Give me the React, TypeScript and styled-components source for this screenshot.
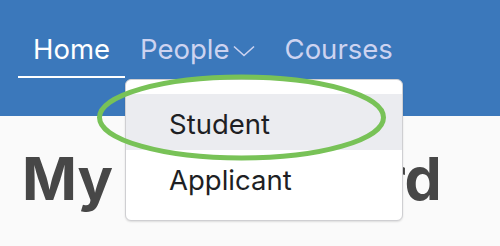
import React from 'react';
import styled, { createGlobalStyle } from 'styled-components';

const GlobalStyle = createGlobalStyle`
  html, body {
    margin: 0;
    padding: 0;
    background: #fafafa;
    font-family: Inter, "Noto Sans", sans-serif;
  }
  * { box-sizing: border-box; }
`;

const Page = styled.div`
  position: relative;
  width: 500px;
  height: 246px;
  overflow: hidden;
`;

const Header = styled.header`
  height: 116px;
  background: #3b78bb;
  padding: 33px 0 0 18px;
`;

const Nav = styled.nav`
  display: flex;
  align-items: flex-start;
`;

const NavItem = styled.div<{ $active?: boolean }>`
  position: relative;
  display: flex;
  align-items: center;
  gap: 3px;
  padding: 0 15px 11px;
  font-size: 27.5px;
  line-height: 32px;
  color: ${(p) => (p.$active ? '#ffffff' : '#cdd3f0')};
  border-bottom: 2px solid ${(p) => (p.$active ? '#ffffff' : 'transparent')};
`;

const Chevron = styled.svg`
  width: 22px;
  height: 12px;
  margin-top: 3px;
`;

const Menu = styled.div`
  position: absolute;
  top: calc(100% + 3px);
  left: 0;
  width: 278px;
  padding: 14px 0;
  background: #ffffff;
  border: 1px solid #cfcfd2;
  border-radius: 6px;
  box-shadow: 0 1px 2px rgba(0, 0, 0, 0.12);
  z-index: 2;
`;

const MenuItem = styled.div<{ $hover?: boolean }>`
  height: 56px;
  display: flex;
  align-items: center;
  padding: 3px 0 0 43px;
  font-size: 27.5px;
  color: #1e1f24;
  background: ${(p) => (p.$hover ? '#ebecf0' : 'transparent')};
`;

const Main = styled.main`
  padding: 26px 0 0 22px;
`;

const Title = styled.h1`
  margin: 0;
  font-size: 59px;
  line-height: 74px;
  font-weight: 700;
  color: #474747;
  white-space: nowrap;
`;

const Highlight = styled.svg`
  position: absolute;
  left: 95px;
  top: 72px;
  width: 294px;
  height: 91px;
  z-index: 3;
  pointer-events: none;
`;

export default function App() {
  return (
    <Page>
      <GlobalStyle />
      <Header>
        <Nav>
          <NavItem $active>Home</NavItem>
          <NavItem>
            People
            <Chevron viewBox="0 0 22 12" fill="none">
              <path d="M1 1.5 L11 10.5 L21 1.5" stroke="#cdd3f0" strokeWidth="1.6" />
            </Chevron>
            <Menu>
              <MenuItem $hover>Student</MenuItem>
              <MenuItem>Applicant</MenuItem>
            </Menu>
          </NavItem>
          <NavItem>Courses</NavItem>
        </Nav>
      </Header>
      <Main>
        <Title>My Dashboard</Title>
      </Main>
      <Highlight viewBox="0 0 294 91" fill="none">
        <ellipse cx="146.5" cy="45.5" rx="142" ry="40.5" stroke="#78c257" strokeWidth="5" />
      </Highlight>
    </Page>
  );
}
